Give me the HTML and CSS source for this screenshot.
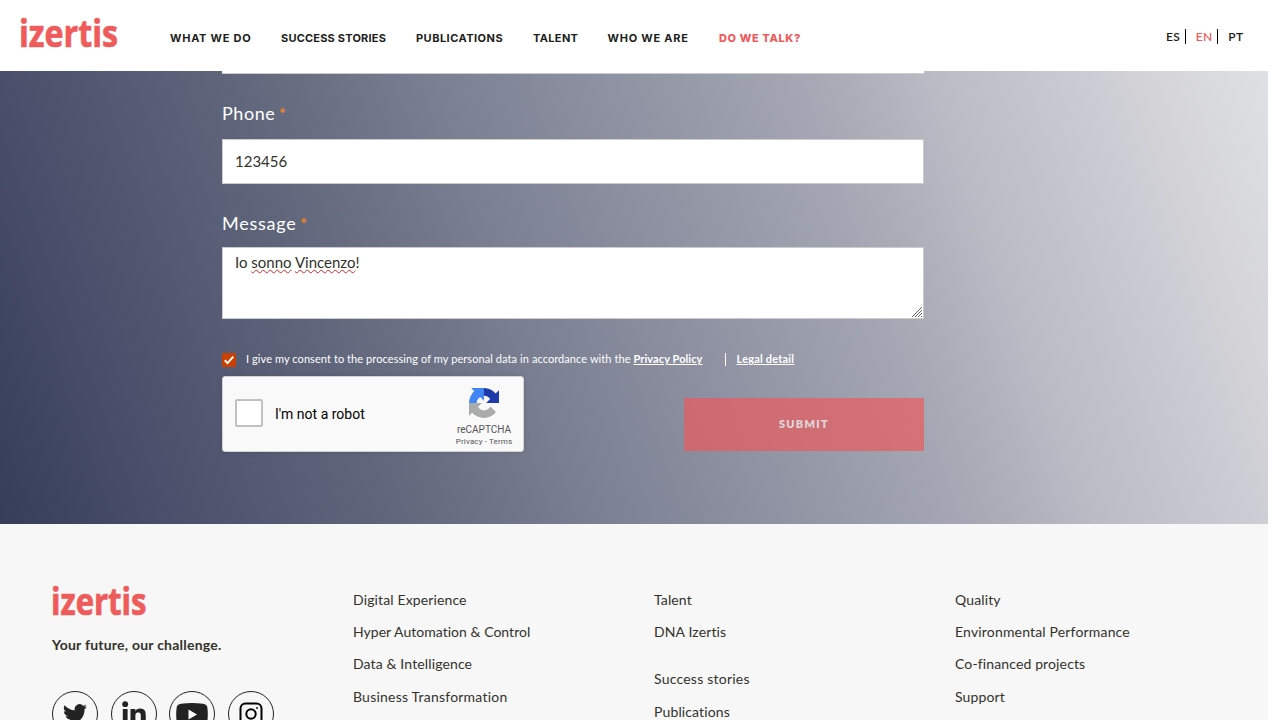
FILE: index.html
```html
<!DOCTYPE html>
<html lang="en">
<head>
<meta charset="utf-8">
<title>Izertis - Do we talk?</title>
<link rel="stylesheet" href="styles.css">
</head>
<body>
<div class="page">
  <header class="header">
    <svg class="logo" width="100" height="36" viewBox="0 0 100 36"><text class="logo-text" x="-1" y="32.200" textLength="99" lengthAdjust="spacingAndGlyphs">izertis</text></svg>
    <nav class="nav">
      <a class="n1">WHAT WE DO</a><a class="n2">SUCCESS STORIES</a><a class="n3">PUBLICATIONS</a><a class="n4">TALENT</a><a class="n5">WHO WE ARE</a><a class="n6 accent">DO WE TALK?</a>
    </nav>
    <div class="langs"><a class="lang">ES</a><a class="lang accent">EN</a><a class="lang last">PT</a></div>
  </header>
  <main class="hero">
    <form class="form">
      <div class="field-end"></div>
      <label class="label phone-label"><span class="l-phone">Phone</span><span class="req">*</span></label>
      <div class="field phone"><span class="v-phone">123456</span></div>
      <label class="label message-label"><span class="l-message">Message</span><span class="req">*</span></label>
      <div class="field message"><span class="v-message">Io <span class="typo">sonno</span> <span class="typo">Vincenzo</span>!</span>
        <svg class="grip" width="12" height="12" viewBox="0 0 12 12"><path d="M1 11L11 1M4 11l7-7M7 11l4-4M10 11l1-1" stroke="#666" stroke-width="1" fill="none"/></svg>
      </div>
      <div class="consent">
        <svg class="check" width="14" height="14" viewBox="0 0 14 14"><rect width="14" height="14" rx="1.5" fill="#c84100"/><path d="M2.8 7.3l2.7 2.8L11.3 3.6" fill="none" stroke="#fff" stroke-width="2"/></svg>
        <span class="consent-text">I give my consent to the processing of my personal data in accordance with the</span>
        <a class="policy">Privacy Policy</a>
        <a class="legal">Legal detail</a>
      </div>
      <div class="actions">
        <div class="captcha">
          <span class="box"></span><span class="robot">I'm not a robot</span>
          <div class="brand">
            <svg width="30" height="30" viewBox="0 0 64 64"><path d="M64 31.955l-.033-1.37V4.687l-7.16 7.16C50.948 4.674 42.033.093 32.05.093c-10.4 0-19.622 4.96-25.458 12.64l11.736 11.86a15.55 15.55 0 0 1 4.754-5.334c2.05-1.6 4.952-2.906 8.968-2.906.485 0 .86.057 1.135.163 4.976.393 9.288 3.14 11.828 7.124l-8.307 8.307L64 31.953" fill="#1c3aa9"/><path d="M31.862.094l-1.37.033H4.594l7.16 7.16C4.58 13.147 0 22.06 0 32.046c0 10.4 4.96 19.622 12.64 25.458L24.5 45.768a15.55 15.55 0 0 1-5.334-4.754c-1.6-2.05-2.906-4.952-2.906-8.968 0-.485.057-.86.163-1.135.393-4.976 3.14-9.288 7.124-11.828l8.307 8.307L31.86.095" fill="#4285f4"/><path d="M.001 32.045l.033 1.37v25.898l7.16-7.16c5.86 7.173 14.774 11.754 24.76 11.754 10.4 0 19.622-4.96 25.458-12.64l-11.736-11.86a15.55 15.55 0 0 1-4.754 5.334c-2.05 1.6-4.952 2.906-8.968 2.906-.485 0-.86-.057-1.135-.163-4.976-.393-9.288-3.14-11.828-7.124l8.307-8.307c-10.522.04-22.4.066-27.295-.005" fill="#ababab"/></svg>
            <span class="recaptcha">reCAPTCHA</span><span class="terms">Privacy - Terms</span>
          </div>
        </div>
        <div class="submit"><span>SUBMIT</span></div>
      </div>
    </form>
  </main>
  <footer class="footer">
    <section class="about">
      <svg class="foot-logo" width="98" height="36" viewBox="0 0 98 36"><text class="foot-logo-text" x="-1" y="31.300" textLength="95.500" lengthAdjust="spacingAndGlyphs">izertis</text></svg>
      <p class="tagline">Your future, our challenge.</p>
      <div class="socials">
        <span class="social"><svg width="24" height="24" viewBox="0 0 24 24" fill="#222"><path d="M23.95 4.57a10 10 0 0 1-2.82.77 4.96 4.96 0 0 0 2.16-2.72c-.95.56-2 .96-3.12 1.19a4.92 4.92 0 0 0-8.39 4.48C7.69 8.09 4.07 6.13 1.64 3.16a4.92 4.92 0 0 0 1.52 6.57 4.9 4.9 0 0 1-2.23-.61v.06c0 2.39 1.69 4.38 3.95 4.83a5 5 0 0 1-2.22.08 4.94 4.94 0 0 0 4.6 3.42A9.87 9.87 0 0 1 0 19.54a14 14 0 0 0 7.55 2.21c9.05 0 14-7.5 14-13.98l-.02-.64a10 10 0 0 0 2.42-2.56z"/></svg></span>
        <span class="social"><svg width="24" height="27" viewBox="0 0 24 27" fill="#222"><circle cx="3.200" cy="3.200" r="2.900"/><path d="M.8 8h4.800v18H.8zM8.500 8h4.800v2.200c.8-1.500 2.500-2.600 4.800-2.600 4.800 0 5.700 3.100 5.700 7.200V26h-5v-10.200c0-2 0-4.200-2.600-4.200s-2.800 2-2.800 4V26H8.500z"/></svg></span>
        <span class="social"><svg width="32" height="23" viewBox="0 0 32 23"><path d="M5 .8Q16-.6 27 .8q4 .4 4.400 4 .8 6.700 0 13.400-.4 3.600-4.400 4-11 1.200-22 0-4-.4-4.400-4-.8-6.700 0-13.400Q1 1.200 5 .8z" fill="#222"/><path d="M12.500 6.500v10l8.500-5z" fill="#fff"/></svg></span>
        <span class="social"><svg width="24" height="24" viewBox="0 0 24 24" fill="none" stroke="#000" stroke-width="2"><rect x="1.500" y="1.500" width="21" height="21" rx="5"/><circle cx="12" cy="12" r="4.700"/><circle cx="18" cy="6" r=".6" stroke-width="1"/></svg></span>
      </div>
    </section>
    <ul class="links"><li class="a1">Digital Experience</li><li class="a2">Hyper Automation &amp; Control</li><li class="a3">Data &amp; Intelligence</li><li class="a4">Business Transformation</li></ul>
    <ul class="links"><li class="b1">Talent</li><li class="b2">DNA Izertis</li><li class="b3 gap">Success stories</li><li class="b4">Publications</li></ul>
    <ul class="links"><li class="c1">Quality</li><li class="c2">Environmental Performance</li><li class="c3">Co-financed projects</li><li class="c4">Support</li></ul>
  </footer>
</div>
</body>
</html>
```

FILE: styles.css
```css
* { box-sizing: border-box; }
html { overflow: hidden; background: #fff; }
body { margin: 0; height: 720px; overflow: hidden; font-family: Lato, "Open Sans", sans-serif; font-variant-ligatures: none; color: #32322b; }
.page { width: 1268px; height: 720px; overflow: hidden; display: flex; flex-direction: column; }
.accent { color: #ef5b5b; }

.header { height: 71px; flex: none; display: flex; background: #fff; color: #1d1d1b; }
.logo { margin: 15px 0 0 20px; flex: none; overflow: visible; }
.logo-text { font: 700 38px "Open Sans", sans-serif; fill: #ef5b5b; stroke: #ef5b5b; stroke-width: .7px; }
.nav { display: flex; margin: 30px 0 0 50px; height: 16px; font: 700 11px/16px Inter, sans-serif; white-space: nowrap; }
.n1 { width: 111px; letter-spacing: .75px; }
.n2 { width: 135px; letter-spacing: .2px; }
.n3 { width: 117px; letter-spacing: .48px; }
.n4 { width: 74.500px; letter-spacing: .35px; }
.n5 { width: 111.500px; letter-spacing: .78px; }
.n6 { letter-spacing: .62px; }
.nav .accent { font-weight: 800; }
.langs { display: flex; margin: 29px 24.500px 0 auto; height: 15px; font: 600 12px/16px Lato, sans-serif; letter-spacing: .4px; }
.lang { padding-right: 4.500px; margin-right: 10px; border-right: 1px solid #000; }
.lang.accent { border-color: #000; }
.lang.last { border: 0; padding: 0; margin: 0; }

.hero { height: 453px; flex: none; background: linear-gradient(70deg, #363d59 0%, #4a506b 12%, #5f657a 27%, #7b8093 42%, #9a9dab 61%, #a8aab6 69%, #babdc6 77%, #c6c9d2 85%, #d1d1d6 90%, #dfe0e4 100%); }
.form { width: 702px; margin-left: 222px; display: flex; flex-direction: column; }
.field-end { height: 3px; background: #fff; border-bottom: 1px solid #ccc; }
.label { display: flex; color: #fff; font-size: 18px; line-height: 24px; height: 24px; }
.phone-label { margin-top: 27px; }
.message-label { margin-top: 27px; }
.l-phone { letter-spacing: .55px; }
.l-message { letter-spacing: .75px; }
.req { margin-left: 4px; font-size: 15px; font-weight: 900; color: #f58220; }
.field { background: #fff; border: 1px solid #ccc; font-size: 15px; padding-left: 12px; position: relative; }
.phone { height: 45px; margin-top: 14px; line-height: 43px; }
.message { height: 72px; margin-top: 12px; line-height: 28px; }
.typo { text-decoration: underline wavy #d22 1px; text-underline-offset: 1px; text-decoration-skip-ink: none; }
.grip { position: absolute; right: 0; bottom: 0; }
.consent { display: flex; height: 14px; margin-top: 34px; font-size: 11px; line-height: 12px; color: #fff; white-space: nowrap; }
.check { margin-right: 10px; flex: none; }
.consent-text { width: 387.500px; letter-spacing: .08px; }
.policy, .legal { font-weight: 700; text-decoration: underline; letter-spacing: .08px; }
.policy { width: 91px; }
.legal { border-left: 1px solid #fff; padding-left: 11px; height: 13px; letter-spacing: .2px; }
.actions { display: flex; justify-content: space-between; margin-top: 9px; }
.captcha { width: 302px; height: 76px; background: #f9f9f9; border: 1px solid #d3d3d3; border-radius: 3px; box-shadow: 0 0 4px 1px rgba(0,0,0,.08); display: flex; color: #000; font-family: Roboto, sans-serif; }
.box { width: 28px; height: 28px; margin: 22px 12px 0 12px; border: 2px solid #c1c1c1; border-radius: 2px; background: #fff; }
.robot { font-size: 14px; line-height: 17px; margin-top: 29px; }
.brand { margin: 11px 10px 0 auto; display: flex; flex-direction: column; align-items: center; color: #555; width: 58px; white-space: nowrap; }
.recaptcha { font-size: 10px; line-height: 12px; margin-top: 6px; }
.terms { font-size: 8px; line-height: 10px; margin-top: 1px; letter-spacing: .13px; }
.submit { width: 240px; height: 53px; padding-bottom: 2px; margin-top: 22px; background: rgba(234,91,94,.7); display: flex; justify-content: center; align-items: center; color: #dfd5da; font: 800 11px Lato, sans-serif; letter-spacing: 1.300px; }

.footer { height: 196px; flex: none; background: #f7f7f7; display: grid; grid-template-columns: 301px 301px 301px 1fr; padding-left: 52px; }
.about { padding-top: 60px; }
.foot-logo { display: block; overflow: visible; }
.foot-logo-text { font: 700 37px "Open Sans", sans-serif; fill: #ef5b5b; stroke: #ef5b5b; stroke-width: .7px; }
.tagline { margin: 15px 0 0; font-size: 14px; line-height: 20px; font-weight: 700; white-space: nowrap; letter-spacing: .23px; }
.socials { display: flex; gap: 12.700px; margin-top: 36px; }
.social { width: 46px; height: 46px; border: 1px solid #222; border-radius: 50%; display: flex; align-items: center; justify-content: center; flex: none; }
.links { list-style: none; margin: 0; padding: 66px 0 0; font-size: 14px; line-height: 20px; letter-spacing: .13px; }
.links li { margin-bottom: 12.200px; white-space: nowrap; }
.links .a2 { letter-spacing: .03px; }
.links .c2 { letter-spacing: .17px; }
.links .a4, .links .b3 { letter-spacing: .22px; }
.links .gap { margin-top: 27px; margin-bottom: 13px; }
```
